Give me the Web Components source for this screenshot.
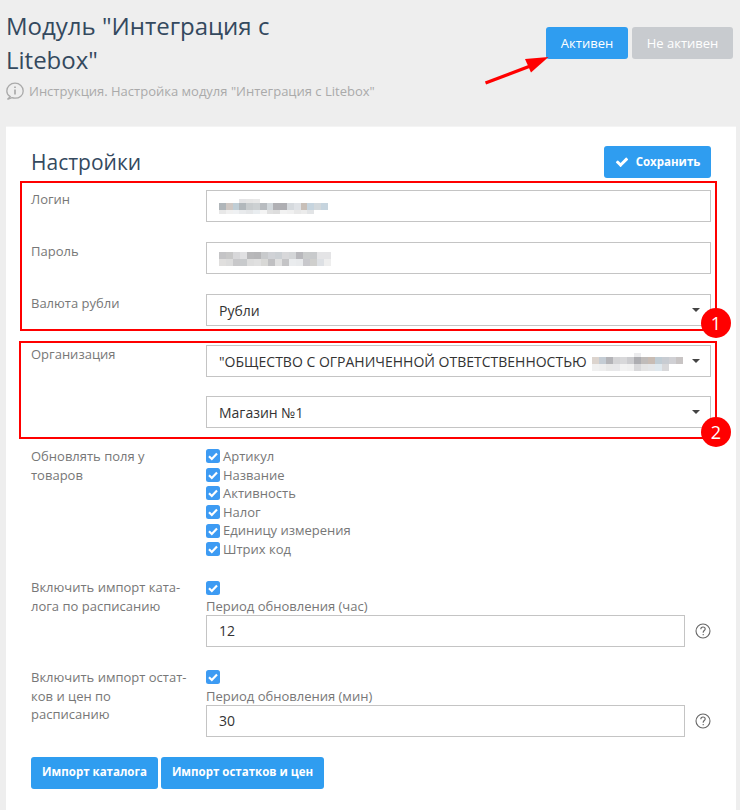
<!DOCTYPE html>
<html lang="ru">
<head>
<meta charset="utf-8">
<title>Модуль Litebox</title>
<style>
    html, body { margin: 0; height: 100%; }
    body {
        background: #eee;
        font: 13px/1.42857 "Open Sans", "Liberation Sans", sans-serif;
        color: #777;
        overflow: hidden;
    }
</style>
</head>
<body>
<module-page>
    <page-header slot="header" title-text='Модуль "Интеграция с Litebox"' note='Инструкция. Настройка модуля "Интеграция с Litebox"'></page-header>
    <settings-card heading="Настройки">
        <mark-box number="1" left="11" top="9" bottom="5" badge="9">
            <form-row label="Логин" gap="20">
                <field-box><blur-text cell="6.8" heights="4,7,4" rows="-,-,-,e4e4e6,e6e6e6,e8e8e8,-|b0b6ba,cfc8c4,c0ced6,b2b8bc,c8ccce,ccd0d2,b8bcc0,d2d8dc,b0b0b4,aeaeb2,d6dade,dfe2e6,c8bfb8,c6d4de,d2d8dc,c6d4de|e8e8e8,f0f0f0,eff1f3,e8eaec,e4e6e8,e9edf0,f4f4f4,e0e0e0,dddddd,f2f2f2,f0f0f0,e8e8e8,ececec,e2e4e6"></blur-text></field-box>
            </form-row>
            <form-row label="Пароль" gap="20">
                <field-box><blur-text cell="7" heights="7,7" rows="c4c4c6,c8c8c8,d8d8da,e0e0e2,b8b8ba,b6b6b8,c8cacc,d0d2d6,ccd0d4,d8d8da,d4d6d8,b8b8bc,cacccc,c8cacc,e4e4e6,e4e4e6|e0dfde,dcdcdc,c8c8ca,c8cacc,dddddd,e0e0e0,d8d8d6,c0c0c2,e0e0e0,c4c4c6,eaecee,e8eaec,c8c8cc,cfcfcd,dde0e4,eeeeee"></blur-text></field-box>
            </form-row>
            <form-row label="Валюта рубли">
                <field-box select>Рубли</field-box>
            </form-row>
        </mark-box>
        <mark-box number="2" left="12" top="4" bottom="11" badge="10" style="margin-top:19px">
            <form-row label="Организация">
                <field-box select gap="19">"ОБЩЕСТВО С ОГРАНИЧЕННОЙ ОТВЕТСТВЕННОСТЬЮ <blur-text cell="7" heights="4,7,7" rows="-,-,-,-,-,-,ececee,-,-,-,-,-,-|dcd4ce,c4ccd4,b4b4b8,d4d4d6,d8d8da,cccccf,adadb1,c0bcba,c8bcb4,c0ccd4,c8ccd2,d0d0d4,c8c4c4|f0f0f0,eeeeee,e8e8e8,e8e8ea,f2f2f2,f0f0f0,d8d8da,e4e4e4,e4e6e8,dfe8ee,d8d8da,ffffff,ffffff"></blur-text></field-box>
                <field-box select>Магазин №1</field-box>
            </form-row>
        </mark-box>
        <form-row label="Обновлять поля у товаров" gap="20" style="margin-top:19px">
            <check-item>Артикул</check-item>
            <check-item>Название</check-item>
            <check-item>Активность</check-item>
            <check-item>Налог</check-item>
            <check-item>Единицу измерения</check-item>
            <check-item>Штрих код</check-item>
        </form-row>
        <form-row label="Включить импорт ката-лога по расписанию" gap="21">
            <check-item></check-item>
            <span class="caption">Период обновления (час)</span>
            <field-box help>12</field-box>
        </form-row>
        <form-row label="Включить импорт остат-ков и цен по расписанию" gap="20">
            <check-item></check-item>
            <span class="caption">Период обновления (мин)</span>
            <field-box help>30</field-box>
        </form-row>
        <button-bar>
            <app-button width="127" strong>Импорт каталога</app-button>
            <app-button width="163" strong>Импорт остатков и цен</app-button>
        </button-bar>
    </settings-card>
</module-page>

<script>
    const check_path = "M1671 566q0 40-28 68l-724 724-136 136q-28 28-68 28t-68-28l-136-136-362-362q-28-28-28-68t28-68l136-136q28-28 68-28t68 28l294 295 656-657q28-28 68-28t68 28l136 136q28 28 28 68z";

    class ModulePage extends HTMLElement {
        constructor() {
            super();
            this.attachShadow({ mode: "open" }).innerHTML = `
            <style>
                :host { display:flex; flex-direction:column; height:810px; position:relative; }
                #arrow { position:absolute; left:484px; top:54px; }
            </style>
            <slot name="header"></slot>
            <slot></slot>
            <svg id="arrow" width="68" height="34" viewBox="0 0 68 34">
                <path d="M1.500 29 L45 12.500" stroke="#f00" stroke-width="3.400" fill="none"/>
                <path d="M64.500 3 L41 5 L47 18.500 Z" fill="#f00"/>
            </svg>`;
        }
    }

    class PageHeader extends HTMLElement {
        constructor() {
            super();
            this.attachShadow({ mode: "open" }).innerHTML = `
            <style>
                :host { display:flex; justify-content:space-between; height:126px; padding:9px 7px 0 6px; box-sizing:border-box; }
                h1 { margin:0; width:300px; font-size:24px; line-height:34px; font-weight:400; color:#34495e; }
                #note { display:flex; align-items:center; gap:5px; margin-top:4px; height:20px; color:#aaa; }
                #states { display:flex; gap:4px; margin-top:18px; align-items:flex-start; }
            </style>
            <div>
                <h1></h1>
                <div id="note">
                    <svg width="18" height="18" viewBox="0 0 18 18" fill="none" stroke="#aaa" stroke-width="1.300">
                        <path d="M4.200 14.600 C2 13.200 .8 11.200 .8 8.900 C.8 4.600 4.400 1.200 9 1.200 C13.600 1.200 17.200 4.600 17.200 8.900 C17.200 13.200 13.600 16.200 9 16.200 C7.900 16.200 6.800 16 5.900 15.700 L1.500 17.300 Z"/>
                        <path d="M9 7.500 V12.500 M9 4.500 V6" stroke-width="1.700"/>
                    </svg>
                    <span id="note-text"></span>
                </div>
            </div>
            <div id="states">
                <app-button width="82">Активен</app-button>
                <app-button width="101" off>Не активен</app-button>
            </div>`;
            this.shadowRoot.querySelector("h1").textContent = this.getAttribute("title-text");
            this.shadowRoot.querySelector("#note-text").textContent = this.getAttribute("note");
        }
    }

    class AppButton extends HTMLElement {
        constructor() {
            super();
            this.attachShadow({ mode: "open" }).innerHTML = `
            <style>
                :host { display:inline-flex; align-items:center; justify-content:center; gap:7px; box-sizing:border-box; height:32px; border-radius:3px; background:#2f9df0; color:#fff; font-size:13px; white-space:nowrap; }
                :host([off]) { background:#c8cbcf; }
                :host([strong]) { font-weight:700; font-size:11.5px; }
                svg { display:none; }
                :host([save]) svg { display:block; }
            </style>
            <svg width="14" height="14" viewBox="0 0 1792 1792" fill="#fff"><path d="${check_path}"/></svg>
            <slot></slot>`;
            this.style.width = (this.getAttribute("width") || 100) + "px";
        }
    }

    class SettingsCard extends HTMLElement {
        constructor() {
            super();
            this.attachShadow({ mode: "open" }).innerHTML = `
            <style>
                :host { display:block; flex:1; margin:0 4px 0 6px; padding:19px 25px 0 25px; background:#fff; border-top:1px solid #f4f4f4; box-sizing:border-box; }
                #top { display:flex; justify-content:space-between; height:44px; }
                h2 { margin:0; font-size:21px; line-height:32px; font-weight:400; color:#34495e; }
            </style>
            <div id="top">
                <h2></h2>
                <app-button width="107" save strong>Сохранить</app-button>
            </div>
            <slot></slot>`;
            this.shadowRoot.querySelector("h2").textContent = this.getAttribute("heading");
        }
    }

    class MarkBox extends HTMLElement {
        constructor() {
            super();
            const top = this.getAttribute("top"), bottom = this.getAttribute("bottom");
            const left = this.getAttribute("left"), badge = this.getAttribute("badge");
            this.attachShadow({ mode: "open" }).innerHTML = `
            <style>
                :host { display:block; position:relative; }
                #frame { position:absolute; left:-${left}px; right:-6px; top:-${top}px; bottom:-${bottom}px; border:2px solid #f00; pointer-events:none; }
                #badge { position:absolute; right:-16px; bottom:-${badge}px; width:30px; height:30px; border-radius:50%; background:#f00; color:#fff; font-size:18px; line-height:30px; text-align:center; }
            </style>
            <slot></slot>
            <div id="frame"><div id="badge">${this.getAttribute("number")}</div></div>`;
        }
    }

    class FormRow extends HTMLElement {
        constructor() {
            super();
            this.attachShadow({ mode: "open" }).innerHTML = `
            <style>
                :host { display:grid; grid-template-columns:175px 1fr; color:#777; }
                #label { padding-right:14px; }
                #body { display:flex; flex-direction:column; min-width:0; }
                ::slotted(.caption) { height:18px; line-height:18px; }
            </style>
            <div id="label"></div>
            <div id="body"><slot></slot></div>`;
            this.shadowRoot.querySelector("#label").textContent = this.getAttribute("label");
            this.style.marginBottom = (this.getAttribute("gap") || 0) + "px";
        }
    }

    class FieldBox extends HTMLElement {
        constructor() {
            super();
            this.attachShadow({ mode: "open" }).innerHTML = `
            <style>
                :host { display:flex; align-items:center; height:32px; flex:none; position:relative; }
                #box { flex:1; min-width:0; height:100%; box-sizing:border-box; display:flex; align-items:center; gap:5px; padding:1px 12px 0; border:1px solid #c4c4c4; background:#fff; color:#333; font-size:14px; white-space:nowrap; overflow:hidden; }
                #caret { display:none; position:absolute; right:11px; top:14px; border:4px solid transparent; border-top:4px solid #444; border-bottom:0; }
                :host([select]) #caret { display:block; }
                #help { display:none; flex:none; width:26px; justify-content:flex-end; }
                :host([help]) #help { display:flex; }
            </style>
            <div id="box"><slot></slot></div>
            <div id="caret"></div>
            <div id="help">
                <svg width="16" height="16" viewBox="0 0 16 16" fill="none" stroke="#666" stroke-width="1.100">
                    <circle cx="8" cy="8" r="7"/>
                    <path d="M5.800 6.200 C5.800 4.900 6.800 4 8 4 C9.300 4 10.200 4.900 10.200 6 C10.200 7.400 8.200 7.600 8.200 9.300 V9.800 M8.200 11 V12.200"/>
                </svg>
            </div>`;
            const gap = this.getAttribute("gap");
            if (gap) this.style.marginBottom = gap + "px";
        }
    }

    // stand-in for the pixelated parts of the screenshot
    class BlurText extends HTMLElement {
        constructor() {
            super();
            const cell = this.getAttribute("cell");
            const heights = this.getAttribute("heights").split(",");
            const rows = this.getAttribute("rows").split("|").map(r => r.split(","));
            let html = "";
            rows.forEach((r, n) => {
                html += `<div class="row" style="height:${heights[n]}px">` + r.map(c => `<i style="background:${c == "-" ? "transparent" : "#" + c}"></i>`).join("") + "</div>";
            });
            this.attachShadow({ mode: "open" }).innerHTML = `
            <style>
                :host { display:inline-flex; flex-direction:column; flex:none; }
                .row { display:flex; }
                i { display:block; width:${cell}px; height:100%; }
            </style>${html}`;
        }
    }

    class CheckItem extends HTMLElement {
        constructor() {
            super();
            this.attachShadow({ mode: "open" }).innerHTML = `
            <style>
                :host { display:flex; align-items:center; gap:3px; height:18.57px; color:#777; }
                svg { flex:none; }
            </style>
            <svg width="14" height="14" viewBox="0 0 14 14">
                <rect width="14" height="14" rx="2.500" fill="#3d9bf3"/>
                <path d="M3 7.300 L5.800 10 L11 4.600" fill="none" stroke="#fff" stroke-width="2.200"/>
            </svg>
            <slot></slot>`;
        }
    }

    class ButtonBar extends HTMLElement {
        constructor() {
            super();
            this.attachShadow({ mode: "open" }).innerHTML = `
            <style>:host { display:flex; gap:3px; }</style>
            <slot></slot>`;
        }
    }

    customElements.define("app-button", AppButton);
    customElements.define("blur-text", BlurText);
    customElements.define("check-item", CheckItem);
    customElements.define("field-box", FieldBox);
    customElements.define("form-row", FormRow);
    customElements.define("mark-box", MarkBox);
    customElements.define("button-bar", ButtonBar);
    customElements.define("page-header", PageHeader);
    customElements.define("settings-card", SettingsCard);
    customElements.define("module-page", ModulePage);
</script>
</body>
</html>
